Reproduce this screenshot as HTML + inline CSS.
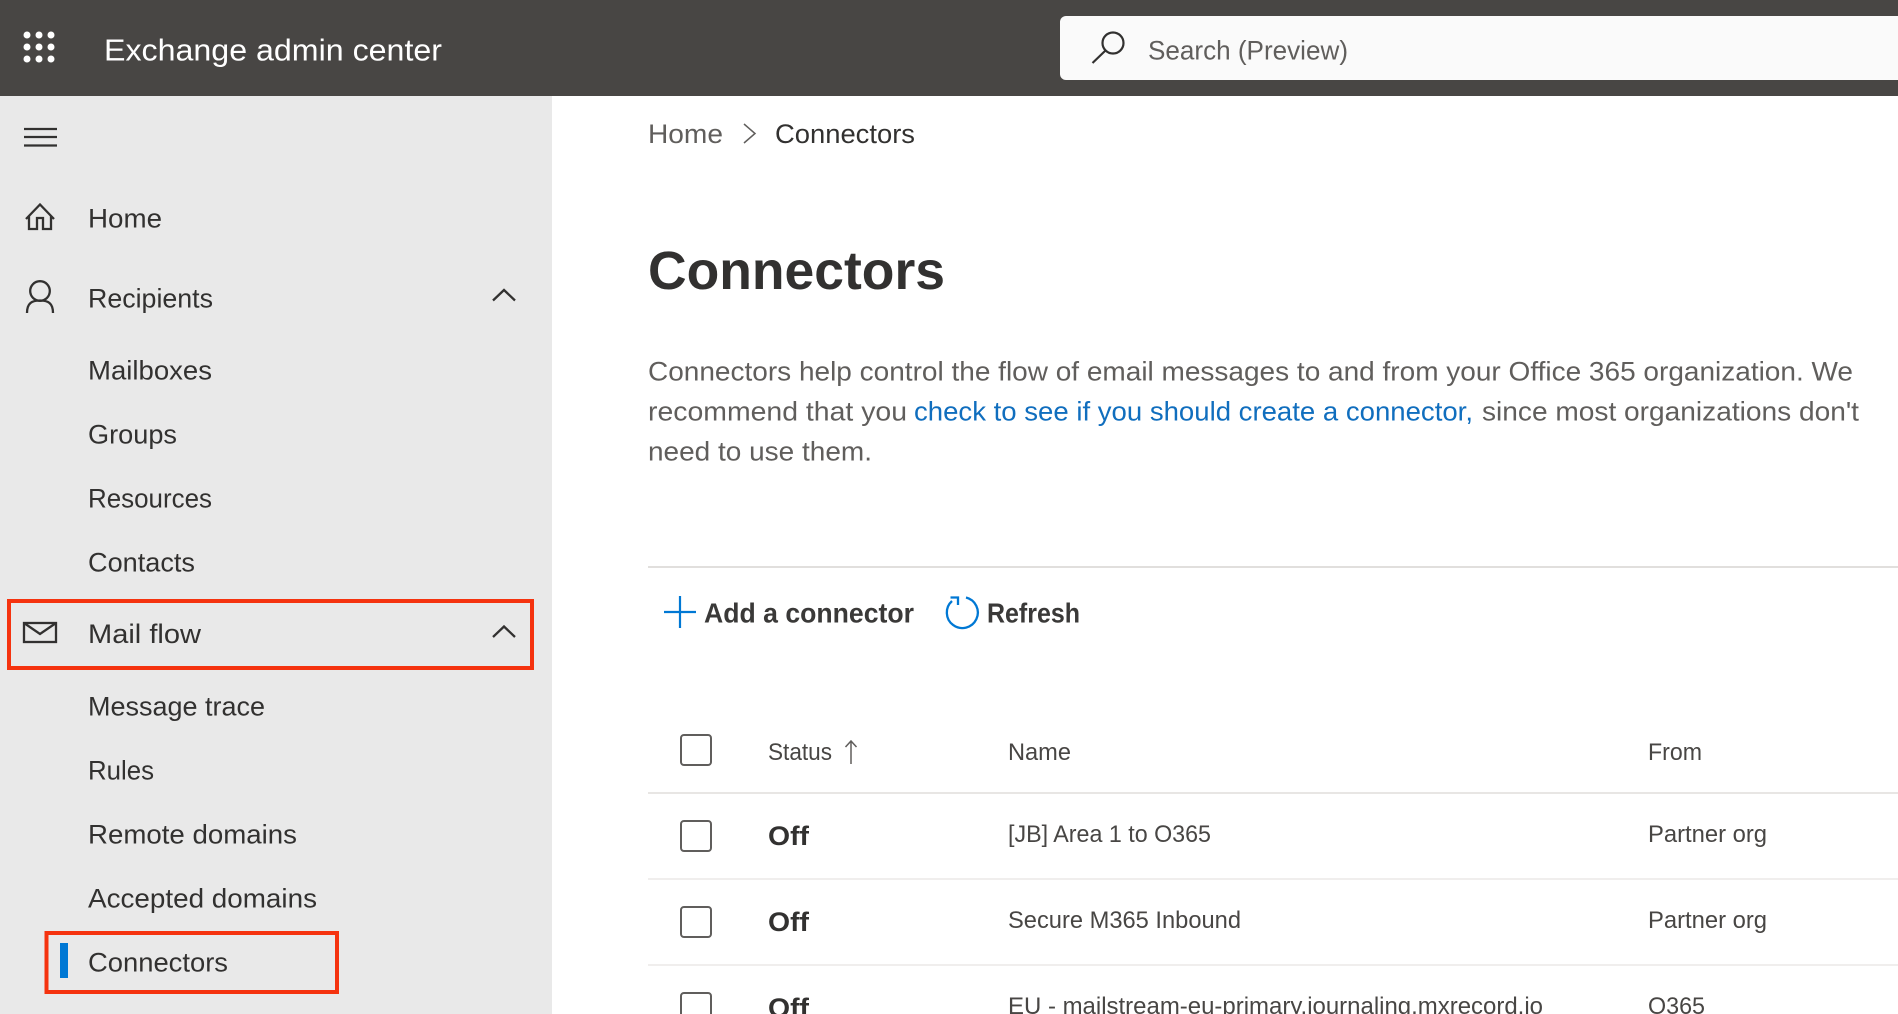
<!DOCTYPE html>
<html lang="en">
<head>
<meta charset="utf-8">
<title>Exchange admin center - Connectors</title>
<style>
html,body{margin:0;padding:0;background:#fff;width:1898px;height:1014px;overflow:hidden}
svg{display:block}
text{font-family:"Liberation Sans",sans-serif;fill:#323130}
.n{font-size:27px}
.g{fill:#605e5c}
.t{font-size:24px}
.b{font-weight:bold}
.p{font-size:27px;fill:#605e5c}
</style>
</head>
<body>
<svg width="1898" height="1014" viewBox="0 0 1898 1014" xmlns="http://www.w3.org/2000/svg">
<rect width="1898" height="1014" fill="#fff"/>
<!-- header -->
<rect width="1898" height="96" fill="#484644"/>
<g fill="#fff">
<circle cx="27" cy="35" r="3.5"/><circle cx="39" cy="35" r="3.5"/><circle cx="51" cy="35" r="3.5"/>
<circle cx="27" cy="47" r="3.5"/><circle cx="39" cy="47" r="3.5"/><circle cx="51" cy="47" r="3.5"/>
<circle cx="27" cy="59" r="3.5"/><circle cx="39" cy="59" r="3.5"/><circle cx="51" cy="59" r="3.5"/>
</g>
<text x="104" y="60.500" font-size="31" style="fill:#fff" textLength="338" lengthAdjust="spacingAndGlyphs">Exchange admin center</text>
<rect x="1060" y="16" width="860" height="64" rx="6" fill="#fafafa"/>
<g fill="none" stroke="#323130" stroke-width="2.200">
<circle cx="1113" cy="43" r="10.500"/>
<path d="M1105.500 50.500L1092.500 63"/>
</g>
<text x="1148" y="59.500" font-size="27" class="g" textLength="200" lengthAdjust="spacingAndGlyphs">Search (Preview)</text>
<!-- sidebar -->
<rect x="0" y="96" width="552" height="918" fill="#e9e9e9"/>
<g fill="none" stroke="#323130" stroke-width="2.300">
<path d="M24 129H57M24 137H57M24 145.500H57"/>
<path d="M26 219L40 204.500L54 219M29 216V229H37V218H43V229H51V216"/>
<circle cx="40" cy="291" r="9.800"/>
<path d="M27 313C27 303 32 300.500 40 300.500C48 300.500 53 303 53 313"/>
<path d="M493 300.500L504 290L515 300.500"/>
<rect x="24" y="623" width="32" height="19"/>
<path d="M24 623L40 634L56 623"/>
<path d="M493 637L504 626.500L515 637"/>
</g>
<text x="88" y="227.500" class="n" textLength="74" lengthAdjust="spacingAndGlyphs">Home</text>
<text x="88" y="307.500" class="n" textLength="125" lengthAdjust="spacingAndGlyphs">Recipients</text>
<text x="88" y="379.500" class="n" textLength="124" lengthAdjust="spacingAndGlyphs">Mailboxes</text>
<text x="88" y="443.500" class="n" textLength="89" lengthAdjust="spacingAndGlyphs">Groups</text>
<text x="88" y="507.500" class="n" textLength="124" lengthAdjust="spacingAndGlyphs">Resources</text>
<text x="88" y="571.500" class="n" textLength="107" lengthAdjust="spacingAndGlyphs">Contacts</text>
<text x="88" y="643" class="n" textLength="113" lengthAdjust="spacingAndGlyphs">Mail flow</text>
<text x="88" y="715.500" class="n" textLength="177" lengthAdjust="spacingAndGlyphs">Message trace</text>
<text x="88" y="779.500" class="n" textLength="66" lengthAdjust="spacingAndGlyphs">Rules</text>
<text x="88" y="843.500" class="n" textLength="209" lengthAdjust="spacingAndGlyphs">Remote domains</text>
<text x="88" y="907.500" class="n" textLength="229" lengthAdjust="spacingAndGlyphs">Accepted domains</text>
<text x="88" y="971.500" class="n" textLength="140" lengthAdjust="spacingAndGlyphs">Connectors</text>
<rect x="60" y="943" width="8" height="35" fill="#0078d4"/>
<rect x="9" y="601" width="523" height="67" fill="none" stroke="#f5330f" stroke-width="4"/>
<rect x="46.500" y="933" width="290.500" height="59" fill="none" stroke="#f5330f" stroke-width="4"/>
<!-- breadcrumb -->
<text x="648" y="143" class="n g" textLength="75" lengthAdjust="spacingAndGlyphs">Home</text>
<path d="M744 124L755 133.500L744 143" fill="none" stroke="#605e5c" stroke-width="1.500"/>
<text x="775" y="143" class="n" textLength="140" lengthAdjust="spacingAndGlyphs">Connectors</text>
<text x="648" y="289" font-size="54" class="b" textLength="297" lengthAdjust="spacingAndGlyphs">Connectors</text>
<!-- paragraph -->
<text x="648" y="380.500" class="p" textLength="1205" lengthAdjust="spacingAndGlyphs">Connectors help control the flow of email messages to and from your Office 365 organization. We</text>
<text x="648" y="420.500" class="p" textLength="259" lengthAdjust="spacingAndGlyphs">recommend that you</text>
<text x="914" y="420.500" class="p" style="fill:#106ebe" textLength="559" lengthAdjust="spacingAndGlyphs">check to see if you should create a connector,</text>
<text x="1482" y="420.500" class="p" textLength="377" lengthAdjust="spacingAndGlyphs">since most organizations don't</text>
<text x="648" y="460.500" class="p" textLength="224" lengthAdjust="spacingAndGlyphs">need to use them.</text>
<rect x="648" y="566" width="1250" height="2" fill="#e1dfdd"/>
<!-- command bar -->
<path d="M680 596V628M664 612H696" fill="none" stroke="#0078d4" stroke-width="2.200"/>
<text x="704" y="622.500" font-size="28" class="b" style="fill:#3a3938" textLength="210" lengthAdjust="spacingAndGlyphs">Add a connector</text>
<g fill="none" stroke="#0078d4" stroke-width="2.300">
<path d="M966 597.500A15.500 15.500 0 1 1 952 601"/>
<path d="M950.500 597.500H958V605"/>
</g>
<text x="987" y="622.500" font-size="28" class="b" style="fill:#3a3938" textLength="93" lengthAdjust="spacingAndGlyphs">Refresh</text>
<!-- table -->
<g fill="none" stroke="#605e5c" stroke-width="2">
<rect x="681" y="735" width="30" height="30" rx="3"/>
<rect x="681" y="821" width="30" height="30" rx="3"/>
<rect x="681" y="907" width="30" height="30" rx="3"/>
<rect x="681" y="993" width="30" height="30" rx="3"/>
</g>
<text x="768" y="760" class="t g" style="fill:#484644" textLength="64" lengthAdjust="spacingAndGlyphs">Status</text>
<path d="M851 764V741M845.500 747L851 741L856.500 747" fill="none" stroke="#605e5c" stroke-width="1.500"/>
<text x="1008" y="760" class="t" style="fill:#484644" textLength="63" lengthAdjust="spacingAndGlyphs">Name</text>
<text x="1648" y="760" class="t" style="fill:#484644" textLength="54" lengthAdjust="spacingAndGlyphs">From</text>
<rect x="648" y="792" width="1250" height="2" fill="#e8e6e4"/>
<rect x="648" y="878" width="1250" height="2" fill="#f0eeed"/>
<rect x="648" y="964" width="1250" height="2" fill="#f0eeed"/>
<text x="768" y="845" font-size="27" class="b" textLength="41" lengthAdjust="spacingAndGlyphs">Off</text>
<text x="1008" y="842" class="t" style="fill:#484644" textLength="203" lengthAdjust="spacingAndGlyphs">[JB] Area 1 to O365</text>
<text x="1648" y="842" class="t" style="fill:#484644" textLength="119" lengthAdjust="spacingAndGlyphs">Partner org</text>
<text x="768" y="931" font-size="27" class="b" textLength="41" lengthAdjust="spacingAndGlyphs">Off</text>
<text x="1008" y="928" class="t" style="fill:#484644" textLength="233" lengthAdjust="spacingAndGlyphs">Secure M365 Inbound</text>
<text x="1648" y="928" class="t" style="fill:#484644" textLength="119" lengthAdjust="spacingAndGlyphs">Partner org</text>
<text x="768" y="1017" font-size="27" class="b" textLength="41" lengthAdjust="spacingAndGlyphs">Off</text>
<text x="1008" y="1014" class="t" style="fill:#484644" textLength="535" lengthAdjust="spacingAndGlyphs">EU - mailstream-eu-primary.journaling.mxrecord.io</text>
<text x="1648" y="1014" class="t" style="fill:#484644" textLength="57" lengthAdjust="spacingAndGlyphs">O365</text>
</svg>
</body>
</html>
